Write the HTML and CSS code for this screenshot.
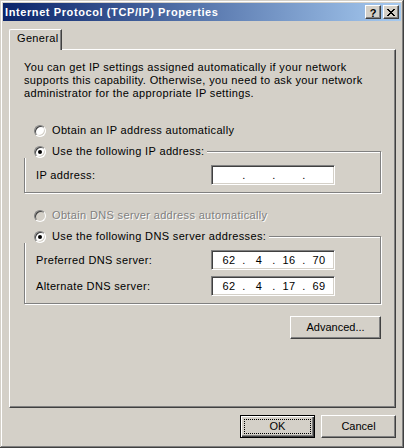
FILE: index.html
```html
<!DOCTYPE html>
<html lang="en">
<head>
    <meta charset="UTF-8">
    <title>Internet Protocol (TCP/IP) Properties</title>
    <link rel="stylesheet" href="styles.css">
</head>
<body>

    <div class="window">
        <div class="titlebar">
            <span class="title">Internet Protocol (TCP/IP) Properties</span>
            <div class="caption-btns">
                <button class="cap-btn help">?</button>
                <button class="cap-btn">
                    <svg width="8" height="7" viewBox="0 0 8 7" shape-rendering="crispEdges">
                        <path d="M0 0h2v1H0z M6 0h2v1H6z M1 1h2v1H1z M5 1h2v1H5z M2 2h4v1H2z M3 3h2v1H3z M2 4h4v1H2z M1 5h2v1H1z M5 5h2v1H5z M0 6h2v1H0z M6 6h2v1H6z" fill="#000"/>
                    </svg>
                </button>
            </div>
        </div>

        <div class="dialog">
            <div class="tabs">
                <div class="tab">General</div>
            </div>

            <div class="panel">
                <p class="intro">
                    You can get IP settings assigned automatically if your network<br>
                    supports this capability. Otherwise, you need to ask your network<br>
                    administrator for the appropriate IP settings.
                </p>

                <div class="radio-row">
                    <span class="radio"></span>
                    <span>Obtain an IP address automatically</span>
                </div>

                <fieldset class="group">
                    <legend>
                        <span class="radio-row">
                            <span class="radio checked"></span>
                            <span>Use the following IP address:</span>
                        </span>
                    </legend>
                    <div class="field-row">
                        <span>IP address:</span>
                        <div class="ipbox">
                            <span class="octet"></span><span class="dot">.</span>
                            <span class="octet"></span><span class="dot">.</span>
                            <span class="octet"></span><span class="dot">.</span>
                            <span class="octet"></span>
                        </div>
                    </div>
                </fieldset>

                <div class="radio-row spaced">
                    <span class="radio disabled"></span>
                    <span class="disabled-text">Obtain DNS server address automatically</span>
                </div>

                <fieldset class="group">
                    <legend>
                        <span class="radio-row">
                            <span class="radio checked"></span>
                            <span>Use the following DNS server addresses:</span>
                        </span>
                    </legend>
                    <div class="field-row">
                        <span>Preferred DNS server:</span>
                        <div class="ipbox">
                            <span class="octet">62</span><span class="dot">.</span>
                            <span class="octet">4</span><span class="dot">.</span>
                            <span class="octet">16</span><span class="dot">.</span>
                            <span class="octet">70</span>
                        </div>
                    </div>
                    <div class="field-row">
                        <span>Alternate DNS server:</span>
                        <div class="ipbox">
                            <span class="octet">62</span><span class="dot">.</span>
                            <span class="octet">4</span><span class="dot">.</span>
                            <span class="octet">17</span><span class="dot">.</span>
                            <span class="octet">69</span>
                        </div>
                    </div>
                </fieldset>

                <div class="adv-row">
                    <button class="btn wide">Advanced...</button>
                </div>
            </div>

            <div class="footer">
                <button class="btn default"><span class="focus">OK</span></button>
                <button class="btn">Cancel</button>
            </div>
        </div>
    </div>

</body>
</html>
```

FILE: styles.css
```css
* {
    margin: 0;
    padding: 0;
    box-sizing: border-box;
}

body {
    background: #d4d0c8;
    font-family: "Liberation Sans", Arial, sans-serif;
    font-size: 11px;
    line-height: 13px;
    letter-spacing: 0.35px;
    color: #000;
}

/* Ventana */
.window {
    width: 404px;
    height: 448px;
    padding: 3px;
    background: #d4d0c8;
    display: flex;
    flex-direction: column;
    box-shadow: inset -1px -1px #404040, inset 1px 1px #d4d0c8,
                inset -2px -2px #808080, inset 2px 2px #fff;
}

.titlebar {
    height: 18px;
    display: flex;
    align-items: center;
    padding-left: 2px;
    background: linear-gradient(to right, #0a246a, #a6caf0);
    color: #fff;
    font-weight: bold;
}

.title {
    flex: 1;
    letter-spacing: 0.6px;
}

.caption-btns {
    display: flex;
    gap: 2px;
    margin-right: 2px;
}

.cap-btn {
    width: 16px;
    height: 14px;
    display: flex;
    align-items: center;
    justify-content: center;
    background: #d4d0c8;
    border: 1px solid;
    border-color: #fff #404040 #404040 #fff;
    box-shadow: inset -1px -1px #808080;
    font: bold 11px "Liberation Sans", Arial, sans-serif;
    color: #000;
}

.cap-btn.help {
    padding-top: 1px;
}

/* Pestañas */
.dialog {
    flex: 1;
    display: flex;
    flex-direction: column;
    padding: 8px 5px 0 6px;
}

.tabs {
    display: flex;
    height: 20px;
}

.tab {
    position: relative;
    z-index: 1;
    width: 53px;
    height: 21px;
    margin-bottom: -1px;
    padding: 2px 0 0 7px;
    background: #d4d0c8;
    border-top: 1px solid #fff;
    border-left: 1px solid #fff;
    border-right: 1px solid #404040;
    border-top-left-radius: 2px;
    box-shadow: inset -1px 0 #808080;
}

.panel {
    height: 359px;
    padding: 11px 14px 0 14px;
    border: 1px solid;
    border-color: #fff #404040 #404040 #fff;
    box-shadow: inset -1px -1px #808080;
}

.intro {
    margin-bottom: 24px;
}

/* Radios */
.radio-row {
    display: flex;
    align-items: center;
    gap: 6px;
    height: 13px;
    padding-left: 10px;
}

.radio-row.spaced {
    margin-top: 16px;
}

.radio {
    flex: none;
    width: 12px;
    height: 12px;
    display: flex;
    align-items: center;
    justify-content: center;
    border-radius: 50%;
    background: #fff;
    border: 1px solid;
    border-color: #808080 #fff #fff #808080;
    box-shadow: inset 1px 1px #404040, inset -1px -1px #d4d0c8;
}

.radio.checked::after {
    content: "";
    width: 4px;
    height: 4px;
    border-radius: 50%;
    background: #000;
}

.radio.disabled {
    background: #d4d0c8;
}

.disabled-text {
    color: #808080;
    text-shadow: 1px 1px #fff;
}

/* Grupos */
.group {
    margin-top: 8px;
    padding: 7px 11px 7px 11px;
    border: 1px solid #808080;
    box-shadow: inset 1px 1px #fff, 1px 1px #fff;
}

.group legend {
    margin-left: -12px;
    padding-right: 3px;
    background: #d4d0c8;
}

.group + .radio-row {
    margin-top: 16px;
}

.field-row {
    display: grid;
    grid-template-columns: 175px 124px;
    align-items: center;
}

.field-row + .field-row {
    margin-top: 6px;
}

.ipbox {
    height: 20px;
    display: flex;
    align-items: center;
    padding-left: 5px;
    background: #fff;
    border: 1px solid;
    border-color: #808080 #fff #fff #808080;
    box-shadow: inset 1px 1px #404040, inset -1px -1px #d4d0c8;
}

.octet {
    width: 24px;
    text-align: center;
}

.dot {
    width: 6px;
    text-align: center;
}

/* Botones */
.adv-row {
    display: flex;
    justify-content: flex-end;
    margin-top: 12px;
}

.btn {
    width: 75px;
    height: 23px;
    font: inherit;
    color: #000;
    background: #d4d0c8;
    border: 1px solid;
    border-color: #fff #404040 #404040 #fff;
    box-shadow: inset -1px -1px #808080;
}

.btn.wide {
    width: 91px;
}

.btn.default {
    border: 1px solid #000;
    box-shadow: inset 1px 1px #fff, inset -1px -1px #404040, inset -2px -2px #808080;
    outline: 1px dotted #000;
    outline-offset: -5px;
}

.footer {
    display: flex;
    justify-content: flex-end;
    gap: 6px;
    margin-top: 7px;
}
```
